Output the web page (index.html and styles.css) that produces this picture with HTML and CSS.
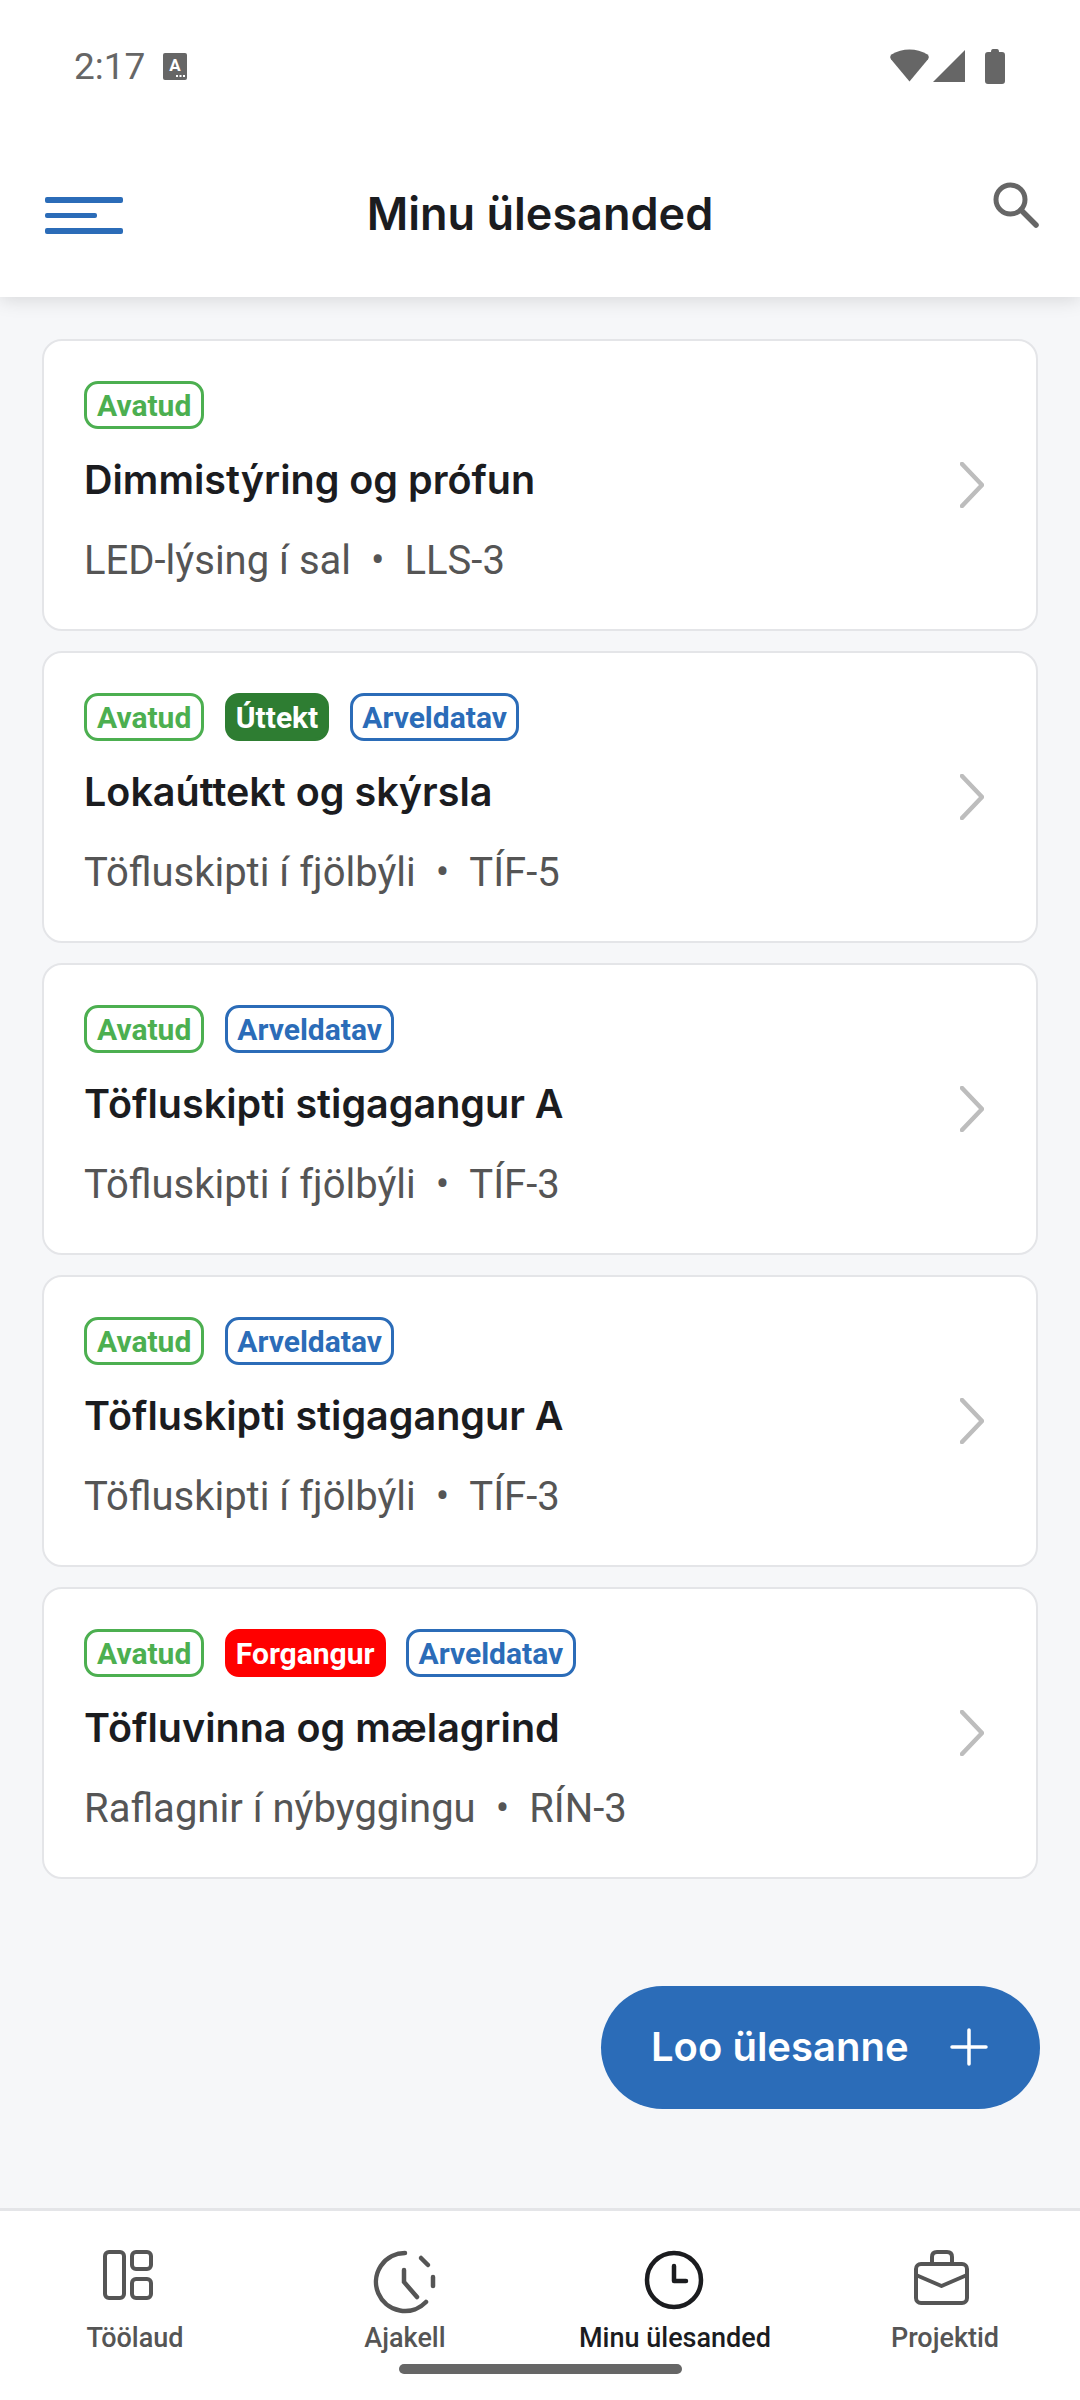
FILE: index.html
```html
<!DOCTYPE html>
<html lang="en">
<head>
    <meta charset="UTF-8">
    <meta name="viewport" content="width=device-width, initial-scale=1.0">
    <title>Minu ülesanded</title>
    <link rel="stylesheet" href="styles.css">
</head>
<body>
    <div class="app">
        <header class="top">
            <!-- Status bar -->
            <div class="status-bar">
                <div class="status-left">
                    <span class="status-time">2:17</span>
                    <svg class="status-a" width="24" height="27" viewBox="0 0 24 27">
                        <rect width="24" height="27" rx="2" fill="#666"/>
                        <text x="12" y="18" text-anchor="middle" class="status-a-text">A</text>
                        <rect x="13" y="22" width="2" height="2" fill="#fff"/>
                        <rect x="16.500" y="22" width="2" height="2" fill="#fff"/>
                        <rect x="20" y="22" width="2" height="2" fill="#fff"/>
                    </svg>
                </div>
                <div class="status-right">
                    <svg width="39" height="34" viewBox="0 0 40 34"><path d="M20 33 L1 10 Q-1 7 2 5 Q10 0 20 0 Q30 0 38 5 Q41 7 39 10 Z" fill="#666"/></svg>
                    <svg width="34" height="34" viewBox="0 0 34 34"><path d="M33 1 V33 H1 Z" fill="#666"/></svg>
                    <svg width="20" height="35" viewBox="0 0 20 35"><path d="M6 3 Q6 0 8 0 H12 Q14 0 14 3 H17 Q20 3 20 6 V32 Q20 35 17 35 H3 Q0 35 0 32 V6 Q0 3 3 3 Z" fill="#666"/></svg>
                </div>
            </div>
            <!-- Title bar -->
            <div class="title-bar">
                <div class="menu-btn">
                    <span class="menu-line"></span>
                    <span class="menu-line menu-line-short"></span>
                    <span class="menu-line"></span>
                </div>
                <h1 class="page-title">Minu ülesanded</h1>
                <svg class="search-icon" width="46" height="46" viewBox="0 0 46 46" fill="none" stroke="#666" stroke-width="5">
                    <circle cx="17.500" cy="17.500" r="14.500"/>
                    <path d="M28 28 L43 43" stroke-width="5.500" stroke-linecap="round"/>
                </svg>
            </div>
        </header>

        <main class="task-list">
            <article class="task-card">
                <div class="task-info">
                    <div class="chips"><span class="chip chip-open">Avatud</span></div>
                    <div class="task-name">Dimmistýring og prófun</div>
                    <div class="task-sub"><span>LED-lýsing í sal</span><span class="dot">•</span><span>LLS-3</span></div>
                </div>
                <svg class="chevron" width="24" height="46" viewBox="0 0 24 46" fill="none" stroke="#bdbdbd" stroke-width="4.500" stroke-linecap="round" stroke-linejoin="round"><path d="M2 2 L22 23 L2 44"/></svg>
            </article>

            <article class="task-card">
                <div class="task-info">
                    <div class="chips">
                        <span class="chip chip-open">Avatud</span>
                        <span class="chip chip-review">Úttekt</span>
                        <span class="chip chip-billable">Arveldatav</span>
                    </div>
                    <div class="task-name">Lokaúttekt og skýrsla</div>
                    <div class="task-sub"><span>Töfluskipti í fjölbýli</span><span class="dot">•</span><span>TÍF-5</span></div>
                </div>
                <svg class="chevron" width="24" height="46" viewBox="0 0 24 46" fill="none" stroke="#bdbdbd" stroke-width="4.500" stroke-linecap="round" stroke-linejoin="round"><path d="M2 2 L22 23 L2 44"/></svg>
            </article>

            <article class="task-card">
                <div class="task-info">
                    <div class="chips">
                        <span class="chip chip-open">Avatud</span>
                        <span class="chip chip-billable">Arveldatav</span>
                    </div>
                    <div class="task-name">Töfluskipti stigagangur A</div>
                    <div class="task-sub"><span>Töfluskipti í fjölbýli</span><span class="dot">•</span><span>TÍF-3</span></div>
                </div>
                <svg class="chevron" width="24" height="46" viewBox="0 0 24 46" fill="none" stroke="#bdbdbd" stroke-width="4.500" stroke-linecap="round" stroke-linejoin="round"><path d="M2 2 L22 23 L2 44"/></svg>
            </article>

            <article class="task-card">
                <div class="task-info">
                    <div class="chips">
                        <span class="chip chip-open">Avatud</span>
                        <span class="chip chip-billable">Arveldatav</span>
                    </div>
                    <div class="task-name">Töfluskipti stigagangur A</div>
                    <div class="task-sub"><span>Töfluskipti í fjölbýli</span><span class="dot">•</span><span>TÍF-3</span></div>
                </div>
                <svg class="chevron" width="24" height="46" viewBox="0 0 24 46" fill="none" stroke="#bdbdbd" stroke-width="4.500" stroke-linecap="round" stroke-linejoin="round"><path d="M2 2 L22 23 L2 44"/></svg>
            </article>

            <article class="task-card">
                <div class="task-info">
                    <div class="chips">
                        <span class="chip chip-open">Avatud</span>
                        <span class="chip chip-priority">Forgangur</span>
                        <span class="chip chip-billable">Arveldatav</span>
                    </div>
                    <div class="task-name">Töfluvinna og mælagrind</div>
                    <div class="task-sub"><span>Raflagnir í nýbyggingu</span><span class="dot">•</span><span>RÍN-3</span></div>
                </div>
                <svg class="chevron" width="24" height="46" viewBox="0 0 24 46" fill="none" stroke="#bdbdbd" stroke-width="4.500" stroke-linecap="round" stroke-linejoin="round"><path d="M2 2 L22 23 L2 44"/></svg>
            </article>

            <!-- Floating action button -->
            <button class="fab">
                <span>Loo ülesanne</span>
                <svg width="38" height="38" viewBox="0 0 38 38" stroke="#fff" stroke-width="3.500" stroke-linecap="round"><path d="M19 2 V36 M2 19 H36"/></svg>
            </button>
        </main>

        <nav class="bottom-nav">
            <div class="nav-item">
                <svg class="nav-icon" width="64" height="64" viewBox="0 0 64 64" fill="none" stroke="#555" stroke-width="4">
                    <rect x="2" y="2" width="19" height="46" rx="4"/>
                    <rect x="29" y="2" width="19" height="17" rx="4"/>
                    <rect x="29" y="29" width="19" height="19" rx="4"/>
                </svg>
                <span class="nav-label">Töölaud</span>
            </div>
            <div class="nav-item">
                <svg class="nav-icon" width="64" height="64" viewBox="0 0 64 64" fill="none" stroke="#555" stroke-width="4.500" stroke-linecap="round">
                    <path d="M32 3 A29 29 0 1 0 53 52"/>
                    <path d="M48 8 L55 15"/>
                    <path d="M60 27 V36"/>
                    <path d="M31 20 V32 L44 47"/>
                </svg>
                <span class="nav-label">Ajakell</span>
            </div>
            <div class="nav-item nav-item-active">
                <svg class="nav-icon" width="64" height="64" viewBox="0 0 64 64" fill="none" stroke="#1b1c1f" stroke-width="4.500" stroke-linecap="round" stroke-linejoin="round">
                    <circle cx="31" cy="30" r="27"/>
                    <path d="M31 16 V31 H43"/>
                </svg>
                <span class="nav-label">Minu ülesanded</span>
            </div>
            <div class="nav-item">
                <svg class="nav-icon" width="64" height="64" viewBox="0 0 64 64" fill="none" stroke="#555" stroke-width="4" stroke-linejoin="round">
                    <rect x="3" y="14" width="51" height="39" rx="5"/>
                    <path d="M19 14 V7 Q19 2 24 2 H34 Q39 2 39 7 V14"/>
                    <path d="M3 25 L28.500 36 L54 25"/>
                </svg>
                <span class="nav-label">Projektid</span>
            </div>
            <div class="home-indicator"></div>
        </nav>
    </div>
</body>
</html>
```

FILE: styles.css
```css
* {
    box-sizing: border-box;
}

body {
    margin: 0;
    background-color: #f6f7f9;
    font-family: 'Inter', 'Roboto', sans-serif;
}

.app {
    display: flex;
    flex-direction: column;
    width: 1080px;
    height: 2400px;
    overflow: hidden;
}

/* Top area */
.top {
    position: relative;
    z-index: 2;
    height: 297px;
    background-color: #fff;
    box-shadow: 0 3px 18px rgba(0, 0, 0, 0.13);
}

.status-bar {
    display: flex;
    justify-content: space-between;
    align-items: center;
    height: 132px;
    padding: 0 75px 0 74px;
}

.status-left {
    display: flex;
    align-items: center;
    gap: 18px;
}

.status-time {
    font-family: 'Roboto', sans-serif;
    font-size: 37px;
    color: #666;
}

.status-a-text {
    font-family: 'Roboto', sans-serif;
    font-size: 17px;
    font-weight: 700;
    fill: #fff;
}

.status-right {
    display: flex;
    align-items: center;
    gap: 3px;
}

.status-right svg:last-child {
    margin-left: 16px;
}

/* Title bar */
.title-bar {
    position: relative;
    display: flex;
    justify-content: center;
    height: 165px;
    padding-top: 54px;
}

.page-title {
    margin: 0;
    font-size: 45px;
    line-height: 56px;
    font-weight: 600;
    color: #1b1c1f;
}

.menu-btn {
    position: absolute;
    left: 45px;
    top: 65px;
    display: flex;
    flex-direction: column;
    gap: 10px;
    width: 78px;
}

.menu-line {
    display: block;
    height: 5.500px;
    border-radius: 2px;
    background-color: #2b6cb8;
}

.menu-line-short {
    width: 52px;
}

.search-icon {
    position: absolute;
    left: 993px;
    top: 50px;
}

/* Task cards */
.task-list {
    position: relative;
    flex: 1;
    display: flex;
    flex-direction: column;
    gap: 20px;
    padding: 42px 42px 0;
}

.task-card {
    display: flex;
    justify-content: space-between;
    align-items: center;
    height: 292px;
    padding: 0 52px 0 40px;
    background-color: #fff;
    border: 2px solid #e4e5e8;
    border-radius: 20px;
}

.task-info {
    display: flex;
    flex-direction: column;
    margin-bottom: 3px;
}

.chips {
    display: flex;
    gap: 20.500px;
    height: 48px;
}

.chip {
    display: flex;
    align-items: center;
    height: 48px;
    padding: 0 10px;
    border: 3px solid transparent;
    border-radius: 14px;
    font-family: 'Roboto', sans-serif;
    font-size: 30px;
    font-weight: 700;
}

.chip-open {
    color: #4caf50;
    border-color: #4caf50;
}

.chip-billable {
    padding: 0 9.500px;
    color: #2b6cb8;
    border-color: #2b6cb8;
}

.chip-review {
    padding: 0 8px;
    color: #fff;
    background-color: #2e7d32;
    border-color: #2e7d32;
}

.chip-priority {
    padding: 0 8px;
    color: #fff;
    background-color: #ff0000;
    border-color: #ff0000;
}

.task-name {
    margin-top: 26px;
    font-size: 39.500px;
    line-height: 50px;
    font-weight: 600;
    color: #1b1c1f;
}

.task-sub {
    display: flex;
    gap: 20px;
    margin-top: 31px;
    font-family: 'Roboto', sans-serif;
    font-size: 40px;
    line-height: 50px;
    color: #555;
}

/* Floating action button */
.fab {
    position: absolute;
    left: 601px;
    top: 1689px;
    display: flex;
    align-items: center;
    gap: 41px;
    width: 439px;
    height: 123px;
    padding: 0 0 2px 50px;
    border: none;
    border-radius: 62px;
    background-color: #2b6cb8;
    color: #fff;
    font-family: 'Inter', sans-serif;
    font-size: 40px;
    font-weight: 600;
}

/* Bottom navigation */
.bottom-nav {
    position: relative;
    display: grid;
    grid-template-columns: repeat(4, 1fr);
    height: 192px;
    padding-top: 39px;
    background-color: #fff;
    border-top: 3px solid #e4e5e8;
}

.nav-item {
    display: flex;
    flex-direction: column;
    align-items: center;
}

.nav-icon {
    display: block;
}

.nav-label {
    margin-top: 9px;
    font-family: 'Roboto', sans-serif;
    font-size: 27px;
    line-height: 30px;
    font-weight: 500;
    color: #555;
}

.nav-item-active .nav-label {
    color: #1b1c1f;
}

.home-indicator {
    position: absolute;
    left: 399px;
    top: 153px;
    width: 283px;
    height: 10px;
    border-radius: 5px;
    background-color: #666;
}
```
